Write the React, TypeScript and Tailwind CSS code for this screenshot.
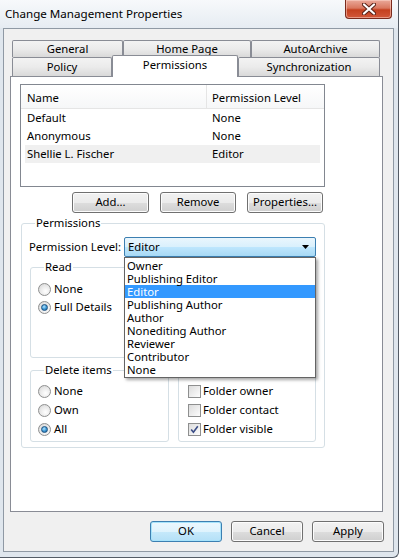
import React from "react";

const LEVELS = [
  "Owner",
  "Publishing Editor",
  "Editor",
  "Publishing Author",
  "Author",
  "Nonediting Author",
  "Reviewer",
  "Contributor",
  "None",
];

const ROWS = [
  { name: "Default", level: "None" },
  { name: "Anonymous", level: "None" },
  { name: "Shellie L. Fischer", level: "Editor", selected: true },
];

function Tab({ label, w, selected }: { label: string; w: string; selected?: boolean }) {
  if (selected) {
    return (
      <div
        className={`${w} relative z-10 -mt-[2px] h-[22px] -mb-[1px] flex items-center justify-center pb-[3px] border border-b-0 border-[#898c95] bg-white rounded-t-[2px]`}
      >
        {label}
      </div>
    );
  }
  return (
    <div
      className={`${w} h-full flex items-center justify-center border border-[#898c95] border-b-0 rounded-t-[2px] bg-gradient-to-b from-[#f3f3f3] via-[#ebebeb] to-[#d9d9d9]`}
    >
      {label}
    </div>
  );
}

function Btn({ label, w, primary }: { label: string; w: string; primary?: boolean }) {
  const look = primary
    ? "border-[#3c7fb1] shadow-[inset_0_0_0_1px_#a6e3fb] bg-[linear-gradient(#ecf8fe_0%,#dff3fd_50%,#c6e9fb_51%,#b4e0f7_100%)]"
    : "border-[#707070] shadow-[inset_0_0_0_1px_#fcfcfc] bg-[linear-gradient(#f2f2f2_0%,#ebebeb_50%,#dddddd_51%,#cfcfcf_100%)]";
  return (
    <div className={`${w} h-[21px] flex items-center justify-center rounded-[3px] border ${look}`}>
      {label}
    </div>
  );
}

function Radio({ label, checked }: { label: string; checked?: boolean }) {
  return (
    <div className="flex items-center gap-[3px] h-full">
      <span className="w-[13px] h-[13px] rounded-full border border-[#8e8f8f] bg-[radial-gradient(circle_at_60%_65%,#ffffff_0%,#e8e8e8_55%,#cfcfcf_100%)] flex items-center justify-center">
        {checked && (
          <span className="w-[7px] h-[7px] rounded-full border border-[#1c5180] bg-[radial-gradient(circle_at_40%_35%,#b6e4ff_0%,#3e9ad6_50%,#1d5f98_100%)]" />
        )}
      </span>
      <span>{label}</span>
    </div>
  );
}

function Check({ label, checked }: { label: string; checked?: boolean }) {
  return (
    <div className="flex items-center gap-[2px] h-full">
      <span className="w-[13px] h-[13px] border border-[#8e8f8f] bg-[linear-gradient(135deg,#dcdcdc,#fdfdfd)] flex items-center justify-center">
        {checked && (
          <svg width="9" height="9" viewBox="0 0 9 9">
            <path d="M1.2 4.6 L3.4 7.2 L7.8 1.2" fill="none" stroke="#3a4c86" strokeWidth="1.6" />
          </svg>
        )}
      </span>
      <span>{label}</span>
    </div>
  );
}

// hideLabel: the caption sits under the open drop-down list
function Group({
  label,
  h,
  children,
  pad,
  hideLabel,
}: {
  label: string;
  h: string;
  children?: React.ReactNode;
  pad: string;
  hideLabel?: boolean;
}) {
  return (
    <fieldset className={`${h} border border-[#d5dfe5] rounded-[3px] ${pad}`}>
      <legend className={`ml-[6px] px-[1px] leading-[16px] ${hideLabel ? "invisible" : ""}`}>{label}</legend>
      {children}
    </fieldset>
  );
}

export default function App() {
  return (
    <div className="w-[399px] h-[558px] flex flex-col whitespace-nowrap bg-[#dfe6ed] text-[11.3px] text-black font-['Segoe_UI','Noto_Sans',sans-serif] border-r border-b border-[#545c66] rounded-br-[6px] overflow-hidden">
      {/* Title bar */}
      <div className="h-[28px] flex items-start justify-between bg-gradient-to-b from-[#f7f9fb] to-[#e6ecf2]">
        <div className="pl-[5px] pt-[6px] leading-[16px] text-[11.6px]">Change Management Properties</div>
        <div className="mr-[6px] w-[47px] h-[19px] flex items-center justify-center rounded-b-[4px] border border-t-0 border-[#7a2a1c] bg-[linear-gradient(#eaa99a_0%,#d9775f_45%,#c4401f_55%,#d2583a_100%)] shadow-[inset_0_0_0_1px_rgba(255,220,210,0.5)]">
          <svg width="14" height="12" viewBox="0 0 14 12">
            <path
              d="M2 1.5 L12 10.5 M12 1.5 L2 10.5"
              stroke="#5b2318"
              strokeWidth="4.2"
              strokeLinecap="round"
            />
            <path d="M2 1.5 L12 10.5 M12 1.5 L2 10.5" stroke="#ffffff" strokeWidth="2.2" strokeLinecap="round" />
          </svg>
        </div>
      </div>

      {/* Client area */}
      <div className="ml-[3px] mr-[4px] h-[524px] flex flex-col bg-[#f0f0f0] border border-[#8f99a4]">
        <div className="ml-[6px] mr-[10px] mt-[11px] flex flex-col">
          {/* Tab headers */}
          <div className="flex h-[17px] ml-[2px]">
            <Tab label="General" w="w-[111px]" />
            <Tab label="Home Page" w="w-[128px]" />
            <Tab label="AutoArchive" w="w-[129px]" />
          </div>
          <div className="flex h-[19px] ml-[2px]">
            <Tab label="Policy" w="w-[100px]" />
            <Tab label="Permissions" w="w-[126px]" selected />
            <Tab label="Synchronization" w="w-[142px]" />
          </div>

          {/* Tab page */}
          <div className="relative h-[436px] border border-[#898c95] bg-white">
            {/* Permissions list */}
            <div className="ml-[9px] mt-[7px] w-[305px] h-[103px] border border-[#828790] bg-white flex flex-col">
              <div className="h-[24px] flex border-b border-[#e5e5e5] bg-gradient-to-b from-white to-[#f6f7f8]">
                <div className="w-[186px] pl-[6px] pt-[5px] border-r border-[#e5e5e5]">Name</div>
                <div className="flex-1 pl-[5px] pt-[5px]">Permission Level</div>
              </div>
              {ROWS.map((r) => (
                <div
                  key={r.name}
                  className={`mx-[4px] h-[18px] flex items-center ${r.selected ? "bg-[#f0f0f0]" : ""}`}
                >
                  <div className="w-[182px] pl-[2px]">{r.name}</div>
                  <div className="pl-[5px]">{r.level}</div>
                </div>
              ))}
            </div>

            <div className="ml-[9px] mt-[5px] w-[305px] pr-[2px] flex justify-end gap-[11px]">
              <Btn label="Add..." w="w-[77px]" />
              <Btn label="Remove" w="w-[76px]" />
              <Btn label="Properties..." w="w-[76px]" />
            </div>

            {/* Permissions group */}
            <fieldset className="ml-[10px] mt-[2px] w-[304px] h-[233px] border border-[#d5dfe5] rounded-[3px] px-[7px]">
              <legend className="ml-[6px] px-[1px] leading-[16px]">Permissions</legend>
              <div className="mt-[6px] h-[20px] flex items-center">
                <div className="w-[95px]">Permission Level:</div>
                <div className="w-[192px] h-[20px] flex items-center justify-between pl-[3px] pr-[6px] border border-[#3c7fb1] rounded-[2px] bg-[linear-gradient(#eaf6fd_0%,#d9f0fc_50%,#bee6fd_51%,#a7d9f5_100%)]">
                  <span>Editor</span>
                  <svg width="7" height="4" viewBox="0 0 7 4">
                    <path d="M0 0 H7 L3.5 4 Z" fill="#000" />
                  </svg>
                </div>
              </div>

              <div className="ml-[1px] mt-[2px] grid grid-cols-[139px_138px] gap-x-[9px] gap-y-[4px]">
                <Group label="Read" h="h-[99px]" pad="px-[7px]">
                  <div className="mt-[5px] flex flex-col">
                    <div className="h-[18px]"><Radio label="None" /></div>
                    <div className="h-[18px]"><Radio label="Full Details" checked /></div>
                  </div>
                </Group>
                <Group label="Write" h="h-[99px]" pad="px-[9px]" hideLabel>
                  <div className="mt-[5px] flex flex-col invisible">
                    <div className="h-[18px]"><Check label="Create items" /></div>
                    <div className="h-[18px]"><Check label="Create subfolders" /></div>
                    <div className="h-[18px]"><Check label="Edit own" /></div>
                    <div className="h-[18px]"><Check label="Edit all" /></div>
                  </div>
                </Group>
                <Group label="Delete items" h="h-[80px]" pad="px-[7px]">
                  <div className="mt-[4px] flex flex-col">
                    <div className="h-[19px]"><Radio label="None" /></div>
                    <div className="h-[19px]"><Radio label="Own" /></div>
                    <div className="h-[19px]"><Radio label="All" checked /></div>
                  </div>
                </Group>
                <Group label="Other" h="h-[80px]" pad="px-[9px]" hideLabel>
                  <div className="mt-[4px] flex flex-col">
                    <div className="h-[19px]"><Check label="Folder owner" /></div>
                    <div className="h-[19px]"><Check label="Folder contact" /></div>
                    <div className="h-[19px]"><Check label="Folder visible" checked /></div>
                  </div>
                </Group>
              </div>
            </fieldset>

            {/* Open dropdown list */}
            <div className="absolute z-20 left-[113px] top-[180px] w-[192px] border border-[#646464] bg-white py-[1px] shadow-[2px_2px_3px_rgba(0,0,0,0.35)]">
              {LEVELS.map((l) => (
                <div
                  key={l}
                  className={`h-[13px] leading-[13px] pl-[2px] ${l === "Editor" ? "bg-[#3399ff] text-white" : ""}`}
                >
                  {l}
                </div>
              ))}
            </div>
          </div>
        </div>

        {/* Dialog buttons */}
        <div className="mt-[9px] mr-[9px] flex justify-end gap-[9px]">
          <Btn label="OK" w="w-[72px]" primary />
          <Btn label="Cancel" w="w-[72px]" />
          <Btn label="Apply" w="w-[72px]" />
        </div>
      </div>
    </div>
  );
}
